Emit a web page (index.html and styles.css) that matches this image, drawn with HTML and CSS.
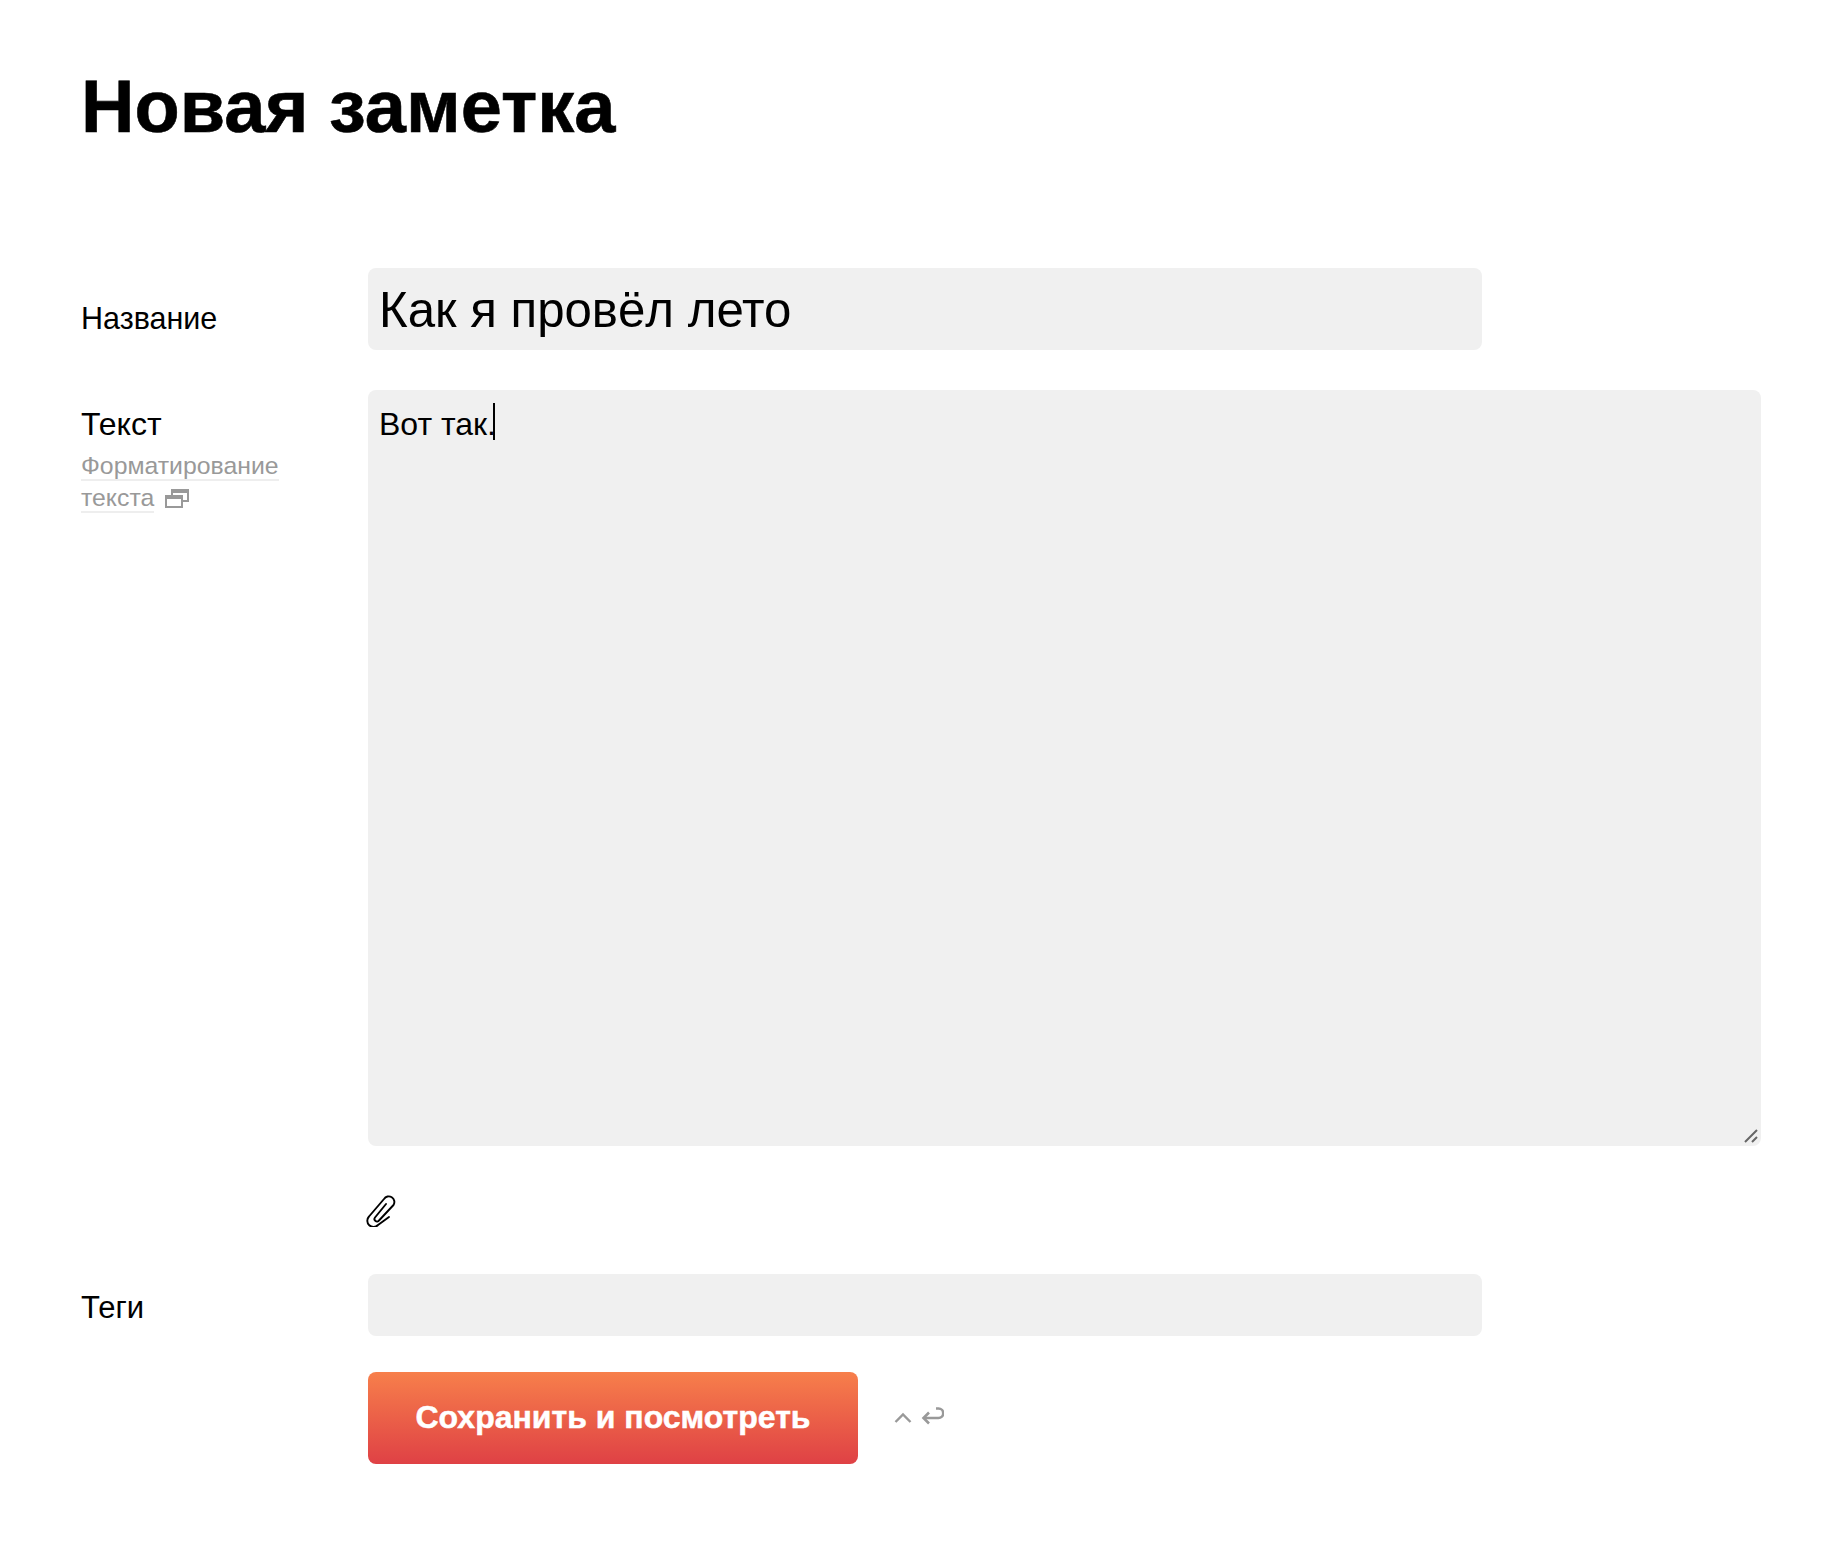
FILE: index.html
```html
<!DOCTYPE html>
<html lang="ru">
<head>
<meta charset="utf-8">
<title>Новая заметка</title>
<link rel="stylesheet" href="styles.css">
</head>
<body>
<main class="page">
  <h1 class="title">Новая заметка</h1>
  <form class="form">
    <div class="row row-name">
      <label class="label label-name" for="name">Название</label>
      <input class="field field-name" id="name" type="text" value="Как я провёл лето">
    </div>
    <div class="row row-text">
      <div class="label-col">
        <label class="label" for="text">Текст</label>
        <p class="hint"><a class="hint-link">Форматирование</a> <a class="hint-link">текста</a><svg class="hint-icon" width="24" height="19" viewBox="0 0 24 19" fill="none" stroke="#999" stroke-width="2"><path d="M1 7h16v11H1z"/><path d="M1 8.500h16" stroke-width="3"/><path d="M7 6V1h16v11h-6"/><path d="M7 2.500h16" stroke-width="3"/></svg></p>
      </div>
      <div class="text-wrap">
        <textarea class="field field-text" id="text">Вот так.</textarea>
        <span class="caret"></span>
        <svg class="grip" width="14" height="14" viewBox="0 0 14 14" fill="none" stroke="#666" stroke-width="2"><path d="M1 13 13 1M8 13l5-5"/></svg>
      </div>
    </div>
    <div class="row row-attach">
      <svg class="clip" width="30" height="32" viewBox="0 0 30 32" fill="none" stroke="#000" stroke-width="1.900" stroke-linecap="round" stroke-linejoin="round"><path d="M23 22 12 30a6 6 0 0 1-9-8.500L18 4a5 5 0 0 1 9.500 6L13 25.500a2.500 2.500 0 0 1-4-3L20 9"/></svg>
    </div>
    <div class="row row-tags">
      <label class="label label-tags" for="tags">Теги</label>
      <input class="field field-tags" id="tags" type="text">
    </div>
    <div class="row row-submit">
      <button class="submit" type="button">Сохранить и посмотреть</button>
      <span class="shortcut">
        <svg width="18" height="11" viewBox="0 0 18 11" fill="none" stroke="#999" stroke-width="2.400"><path d="M1.500 10 9 2.500 16.500 10"/></svg>
        <svg width="23" height="20" viewBox="0 0 23 20" fill="none" stroke="#999" stroke-width="2.600"><path d="M15 1.500h2.500a4.500 4.500 0 0 1 0 9.500H3"/><path d="M8 5.500 2.500 11 8 16.500"/></svg>
      </span>
    </div>
  </form>
</main>
</body>
</html>
```
FILE: styles.css
```css
* { box-sizing: border-box; }
html, body { margin: 0; background: #fff; }
body { font-family: "Liberation Sans", Arial, sans-serif; color: #000; }
.page { padding: 66px 79px 0 81px; }
.title { margin: 0 0 120px; font-size: 74px; line-height: 82px; font-weight: 700; -webkit-text-stroke: 0.6px #000; }
.form { display: flex; flex-direction: column; }
.row { display: flex; align-items: flex-start; }
.label-col { width: 287px; flex: none; }
.label { display: block; font-size: 32px; line-height: 36px; }
.label-name { font-size: 30.500px; }
.label-tags { font-size: 31px; }
.row > .label { width: 287px; flex: none; }
.field { display: block; border: 0; outline: 0; background: #f0f0f0; border-radius: 8px; font-family: inherit; color: #000; margin: 0; }
.row-name { height: 82px; margin-bottom: 40px; }
.row-name .label { padding-top: 32px; }
.field-name { width: 1114px; height: 82px; padding: 0 11px; font-size: 49.200px; }
.row-text { margin-bottom: 49px; }
.row-text .label { padding-top: 16px; }
.hint { margin: 8px 0 0; font-size: 24.800px; line-height: 32px; width: 210px; color: #999; }
.hint-link { border-bottom: 2px solid #eee; }
.hint-icon { margin-left: 11px; vertical-align: -2px; }
.text-wrap { position: relative; flex: none; width: 1393px; height: 756px; }
.field-text { width: 100%; height: 100%; padding: 16px 11px; font-size: 32px; line-height: 36px; resize: none; }
.caret { position: absolute; left: 125px; top: 13px; width: 2px; height: 37px; background: #000; }
.grip { position: absolute; right: 3px; bottom: 3px; }
.row-attach { padding-left: 285px; height: 79px; }
.clip { display: block; }
.row-tags { margin-bottom: 36px; }
.row-tags .label { padding-top: 16px; }
.field-tags { width: 1114px; height: 62px; padding: 0 11px; font-size: 32px; }
.row-submit { padding-left: 287px; align-items: center; }
.submit { width: 490px; height: 92px; border: 0; border-radius: 8px; background: linear-gradient(#f77f4b, #df4145); color: #fff; font-family: inherit; font-size: 32px; font-weight: 700; padding: 0 0 1px; -webkit-text-stroke: 0.5px #fff; }
.shortcut { display: flex; align-items: center; gap: 9px; margin-left: 36px; margin-top: -2px; }
```
